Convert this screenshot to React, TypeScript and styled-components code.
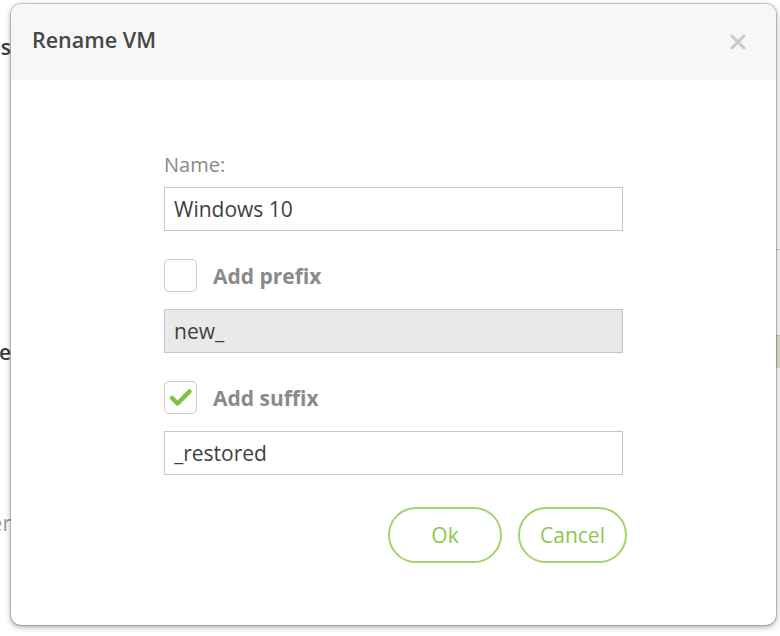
import React, { useState } from 'react';
import styled, { createGlobalStyle } from 'styled-components';

const GlobalStyle = createGlobalStyle`
  html, body {
    margin: 0;
    padding: 0;
    background: #ffffff;
    font-family: "Open Sans", "Liberation Sans", sans-serif;
  }
  #root {
    width: 780px;
    height: 636px;
    position: relative;
    overflow: hidden;
  }
`;

const Page = styled.div`
  display: flex;
  width: 780px;
  height: 636px;
  background: #fff;
`;

const Sidebar = styled.div`
  width: 11px;
  overflow: hidden;
  display: flex;
  flex-direction: column;
  padding-top: 33px;
`;

const SideItem = styled.div<{ $muted?: boolean; $gap: number }>`
  display: flex;
  justify-content: flex-end;
  white-space: nowrap;
  margin-top: ${p => p.$gap}px;
  font-size: 21px;
  line-height: 28px;
  font-weight: ${p => (p.$muted ? 400 : 600)};
  color: ${p => (p.$muted ? '#9a9a9a' : '#3c3c3c')};
`;

const Content = styled.div`
  flex: 1;
  display: flex;
  flex-direction: column;
  padding-top: 249px;
`;

const TableLine = styled.div`
  height: 1px;
  background: #cfcfcf;
`;

const SelectedRow = styled.div`
  margin-top: 85px;
  height: 32px;
  background: #dfe6c8;
  border-top: 1px solid #c9cfb4;
`;

const Overlay = styled.div`
  position: absolute;
  inset: 0;
  display: flex;
  align-items: flex-start;
  padding: 4px 4px 0 11px;
`;

const Dialog = styled.div`
  width: 765px;
  height: 621px;
  background: #fff;
  border-radius: 10px;
  box-shadow: 0 0 0 1px rgba(0, 0, 0, 0.18), 0 2px 6px rgba(0, 0, 0, 0.35);
  overflow: hidden;
  display: flex;
  flex-direction: column;
`;

const Header = styled.div`
  height: 76px;
  flex-shrink: 0;
  background: #f7f7f7;
  display: flex;
  align-items: center;
  justify-content: space-between;
  padding: 0 30px 0 21px;
`;

const Title = styled.h2`
  margin: 0 0 6px;
  font-size: 21.5px;
  font-weight: 600;
  color: #474747;
`;

const CloseButton = styled.button`
  border: none;
  background: none;
  padding: 0;
  width: 16px;
  height: 16px;
  display: flex;
  cursor: pointer;
`;

const Body = styled.div`
  display: flex;
  justify-content: center;
  padding-top: 72px;
`;

const Form = styled.div`
  width: 459px;
  display: flex;
  flex-direction: column;
`;

const Label = styled.label`
  font-size: 20px;
  line-height: 26px;
  color: #8a8a8a;
  margin-bottom: 9px;
`;

const TextInput = styled.input`
  box-sizing: border-box;
  width: 100%;
  height: 44px;
  border: 1px solid #c6c6c6;
  border-radius: 0;
  padding: 0 9px;
  font-family: inherit;
  font-size: 21px;
  color: #3f3f3f;
  background: #fff;
  outline: none;
  &:disabled {
    background: #e9e9e9;
    color: #3f3f3f;
  }
`;

const CheckRow = styled.label`
  display: flex;
  align-items: center;
  gap: 16px;
  margin: 28px 0 17px;
  cursor: pointer;
`;

const Box = styled.span`
  box-sizing: border-box;
  width: 33px;
  height: 33px;
  border: 1.5px solid #c9c9c9;
  border-radius: 5px;
  background: #fff;
  display: flex;
`;

const CheckText = styled.span`
  font-size: 21px;
  font-weight: 700;
  color: #8a8a8a;
`;

const Actions = styled.div`
  display: flex;
  justify-content: flex-end;
  gap: 16px;
  margin: 32px -4px 0 0;
`;

const PillButton = styled.button<{ $w: number }>`
  box-sizing: border-box;
  width: ${p => p.$w}px;
  height: 56px;
  border: 2px solid #a3d46a;
  border-radius: 28px;
  background: #fff;
  font-family: inherit;
  font-size: 21px;
  color: #8cc84b;
  cursor: pointer;
`;

const CheckMark = () => (
  <svg width="30" height="30" viewBox="0 0 30 30" style={{ margin: 'auto' }}>
    <path d="M6 15 L11.5 20.5 L23.5 8.5" fill="none" stroke="#7dc242" strokeWidth="4.5" strokeLinecap="round" strokeLinejoin="round" />
  </svg>
);

const Checkbox: React.FC<{ checked: boolean; label: string; onToggle: () => void }> = ({ checked, label, onToggle }) => (
  <CheckRow onClick={onToggle}>
    <Box>{checked && <CheckMark />}</Box>
    <CheckText>{label}</CheckText>
  </CheckRow>
);

export default function App() {
  const [name, setName] = useState('Windows 10');
  const [prefixOn, setPrefixOn] = useState(false);
  const [suffixOn, setSuffixOn] = useState(true);
  const [prefix, setPrefix] = useState('new_');
  const [suffix, setSuffix] = useState('_restored');

  return (
    <>
      <GlobalStyle />
      <Page>
        <Sidebar>
          <SideItem $gap={0}>Devices</SideItem>
          <SideItem $gap={277}>Machine</SideItem>
          <SideItem $gap={143} $muted>Server</SideItem>
        </Sidebar>
        <Content>
          <TableLine />
          <SelectedRow />
        </Content>
      </Page>
      <Overlay>
        <Dialog>
          <Header>
            <Title>Rename VM</Title>
            <CloseButton aria-label="Close">
              <svg width="16" height="16" viewBox="0 0 16 16">
                <path d="M2 2 L14 14 M14 2 L2 14" stroke="#c9c9c9" strokeWidth="3" strokeLinecap="round" />
              </svg>
            </CloseButton>
          </Header>
          <Body>
            <Form>
              <Label>Name:</Label>
              <TextInput value={name} onChange={e => setName(e.target.value)} />
              <Checkbox checked={prefixOn} label="Add prefix" onToggle={() => setPrefixOn(!prefixOn)} />
              <TextInput value={prefix} disabled={!prefixOn} onChange={e => setPrefix(e.target.value)} />
              <Checkbox checked={suffixOn} label="Add suffix" onToggle={() => setSuffixOn(!suffixOn)} />
              <TextInput value={suffix} disabled={!suffixOn} onChange={e => setSuffix(e.target.value)} />
              <Actions>
                <PillButton $w={114}>Ok</PillButton>
                <PillButton $w={109}>Cancel</PillButton>
              </Actions>
            </Form>
          </Body>
        </Dialog>
      </Overlay>
    </>
  );
}
